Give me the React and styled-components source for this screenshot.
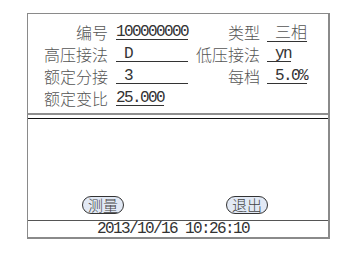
import React from 'react';
import styled, { createGlobalStyle } from 'styled-components';

const GlobalStyle = createGlobalStyle`
  html, body {
    margin: 0;
    padding: 0;
    background: #ffffff;
  }
`;

const Page = styled.div`
  width: 360px;
  height: 254px;
  padding: 13px 0 0 27px;
  box-sizing: border-box;
  font-family: "Noto Sans CJK SC", sans-serif;
  color: #333;
`;

const Frame = styled.div`
  width: 303px;
  height: 226px;
  box-sizing: border-box;
  border-style: solid;
  border-color: #8a8a8a;
  border-width: 1px 2px 2px 1px;
  display: flex;
  flex-direction: column;
`;

const InfoPanel = styled.div`
  height: 101px;
  box-sizing: border-box;
  padding: 7px 0 0 16px;
  border-bottom: 2px solid #8f8f8f;
  display: flex;
  flex-direction: column;
`;

const Row = styled.div`
  display: flex;
  align-items: center;
  height: 22px;
`;

const Label = styled.span`
  width: 64px;
  text-align: right;
  font-size: 16px;
  font-weight: 300;
  line-height: 22px;
  white-space: nowrap;
  color: #555;
`;

const Value = styled.span`
  width: ${p => p.$width}px;
  margin-left: ${p => p.$gap}px;
  font-family: "Liberation Mono", "Noto Sans CJK SC", monospace;
  font-size: 16px;
  letter-spacing: -1.6px;
  line-height: 22px;
  white-space: pre;
  color: #333;
  text-decoration: underline;
  text-decoration-color: #333;
  text-decoration-skip-ink: none;
  text-underline-offset: 3px;
`;

const Cjk = styled.span`
  font-family: "Noto Sans CJK SC", sans-serif;
  font-weight: 300;
  letter-spacing: 0;
  color: #555;
`;

const Work = styled.div`
  flex: 1;
  margin-top: 3px;
  border-top: 1px solid #111;
  border-bottom: 1px solid #555;
  display: flex;
  flex-direction: column;
  justify-content: flex-end;
  padding: 0 0 6px 54px;
`;

const ButtonRow = styled.div`
  display: flex;
  gap: 102px;
`;

const PillButton = styled.button`
  width: 42px;
  height: 18px;
  padding: 0;
  border: 1px solid #333;
  border-radius: 9px;
  background: #e2e9f5;
  font-family: "Noto Sans CJK SC", sans-serif;
  font-size: 15px;
  font-weight: 300;
  line-height: 16px;
  color: #444;
  display: flex;
  align-items: center;
  justify-content: center;
`;

const Footer = styled.div`
  height: 16px;
  padding-left: 69px;
  font-family: "Liberation Mono", monospace;
  font-size: 16px;
  letter-spacing: -1.6px;
  line-height: 16px;
  white-space: pre;
  color: #333;
`;

export default function App() {
  return (
    <Page>
      <GlobalStyle />
      <Frame>
        <InfoPanel>
          <Row>
            <Label>编号</Label>
            <Value $gap={8} $width={80}>100000000</Value>
            <Label>类型</Label>
            <Value $gap={7} $width={44}>{' '}<Cjk>三相</Cjk></Value>
          </Row>
          <Row>
            <Label>高压接法</Label>
            <Value $gap={8} $width={80}>{' D       '}</Value>
            <Label>低压接法</Label>
            <Value $gap={7} $width={44}>{' yn'}</Value>
          </Row>
          <Row>
            <Label>额定分接</Label>
            <Value $gap={8} $width={80}>{' 3       '}</Value>
            <Label>每档</Label>
            <Value $gap={7} $width={44}>{' 5.0%'}</Value>
          </Row>
          <Row>
            <Label>额定变比</Label>
            <Value $gap={8} $width={80}>25.000</Value>
          </Row>
        </InfoPanel>
        <Work>
          <ButtonRow>
            <PillButton>测量</PillButton>
            <PillButton>退出</PillButton>
          </ButtonRow>
        </Work>
        <Footer>2013/10/16 10:26:10</Footer>
      </Frame>
    </Page>
  );
}
